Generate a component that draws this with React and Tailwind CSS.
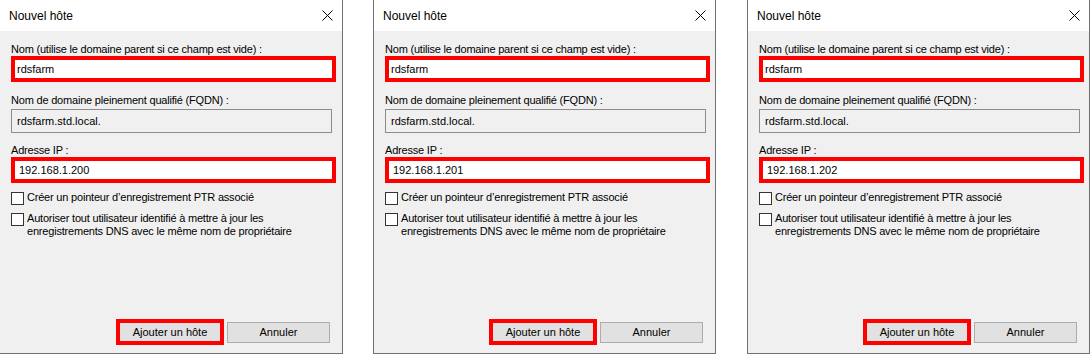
import React from 'react'

const FONT = { fontFamily: '"Liberation Sans", Arial, sans-serif' }

function CloseIcon() {
  return (
    <svg width="11" height="11" viewBox="0 0 11 11" className="block">
      <path d="M0.5 0.5L10.5 10.5M10.5 0.5L0.5 10.5" stroke="#000" strokeWidth="1" fill="none" />
    </svg>
  )
}

function Checkbox() {
  return <span className="block w-[13px] h-[13px] shrink-0 border border-[#333333] bg-white" />
}

function Dialog({ outer, ip }) {
  return (
    <div className={`flex flex-col shrink-0 h-[355px] -mt-[1px] border border-[#707070] bg-[#f0f0f0] ${outer}`}>
      <div className="h-[31px] bg-white flex items-center justify-between pl-[9px] pr-[9px]">
        <span className="text-[12px] text-black leading-none">Nouvel hôte</span>
        <CloseIcon />
      </div>

      <div className="flex-1 flex flex-col pl-[11px] pt-[11px] text-[11px] tracking-[-0.2px] text-black">
        <p className="h-[14px] leading-[14px]">Nom (utilise le domaine parent si ce champ est vide) :</p>
        <div className="w-[325px] h-[26px] border-4 border-[#ff0000] bg-white flex items-center pl-[2px] tracking-normal">
          rdsfarm
        </div>

        <p className="mt-[11px] h-[14px] leading-[14px]">Nom de domaine pleinement qualifié (FQDN) :</p>
        <div className="mt-[2px] w-[321px] h-[24px] border border-[#8c8c8c] bg-[#f0f0f0] flex items-center pl-[5px] tracking-normal">
          rdsfarm.std.local.
        </div>

        <p className="mt-[10px] h-[14px] leading-[14px]">Adresse IP :</p>
        <div className="w-[325px] h-[26px] border-4 border-[#ff0000] bg-white flex items-center pl-[4px] tracking-normal">
          {ip}
        </div>

        <div className="mt-[8px] flex items-start gap-[3px] leading-[13px]">
          <div className="pt-[1px]"><Checkbox /></div>
          <span>Créer un pointeur d’enregistrement PTR associé</span>
        </div>
        <div className="mt-[7px] flex items-start gap-[3px] leading-[13px]">
          <div className="pt-[1px]"><Checkbox /></div>
          <span>
            Autoriser tout utilisateur identifié à mettre à jour les
            <br />
            enregistrements DNS avec le même nom de propriétaire
          </span>
        </div>

        <div className="mt-auto mb-[8px] pr-[12px] flex items-center justify-end gap-[3px] tracking-normal">
          <div className="w-[108px] h-[26px] border-4 border-[#ff0000] bg-[#e1e1e1] flex items-center justify-center">
            Ajouter un hôte
          </div>
          <div className="w-[103px] h-[21px] border border-[#adadad] bg-[#e1e1e1] flex items-center justify-center">
            Annuler
          </div>
        </div>
      </div>
    </div>
  )
}

export default function App() {
  return (
    <div className="w-[1090px] h-[354px] bg-white flex overflow-hidden" style={FONT}>
      <Dialog outer="w-[344px] -ml-[1px]" ip="192.168.1.200" />
      <Dialog outer="w-[343px] ml-[30px]" ip="192.168.1.201" />
      <Dialog outer="w-[343px] ml-[31px]" ip="192.168.1.202" />
    </div>
  )
}
